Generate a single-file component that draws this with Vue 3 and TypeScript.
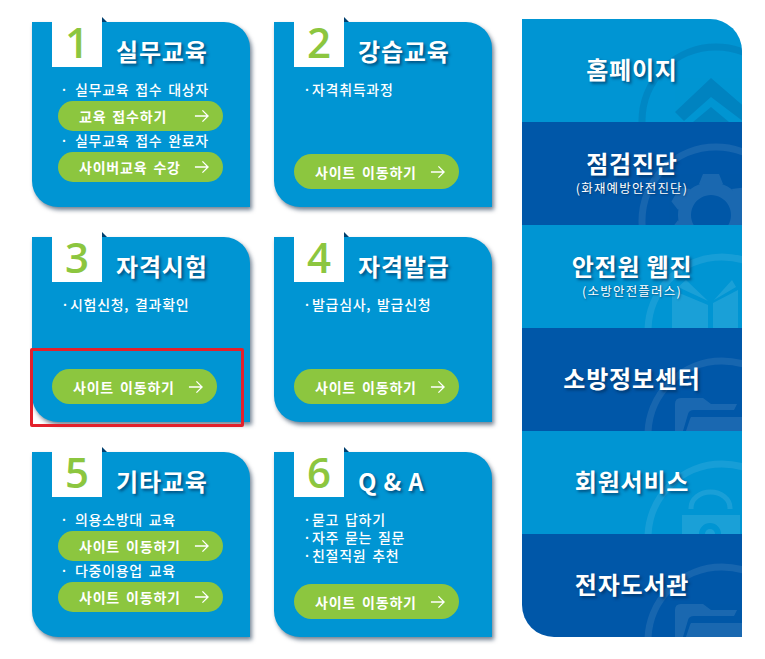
<script setup lang="ts">
interface Block { text: string[]; button?: string }
interface Card { num: number; title: string; wide: boolean; blocks: Block[]; tail?: string; marked?: boolean }
const cards: Card[] = [
  { num: 1, title: '실무교육', wide: true, blocks: [
    { text: ['실무교육 접수 대상자'], button: '교육 접수하기' },
    { text: ['실무교육 접수 완료자'], button: '사이버교육 수강' } ] },
  { num: 2, title: '강습교육', wide: false, blocks: [{ text: ['자격취득과정'] }], tail: '사이트 이동하기' },
  { num: 3, title: '자격시험', wide: false, blocks: [{ text: ['시험신청, 결과확인'] }], tail: '사이트 이동하기', marked: true },
  { num: 4, title: '자격발급', wide: false, blocks: [{ text: ['발급심사, 발급신청'] }], tail: '사이트 이동하기' },
  { num: 5, title: '기타교육', wide: true, blocks: [
    { text: ['의용소방대 교육'], button: '사이트 이동하기' },
    { text: ['다중이용업 교육'], button: '사이트 이동하기' } ] },
  { num: 6, title: 'Q & A', wide: false, blocks: [{ text: ['묻고 답하기', '자주 묻는 질문', '친절직원 추천'] }], tail: '사이트 이동하기' },
]
const bands = [
  { title: '홈페이지', sub: '', kind: 'home', dark: false, cx: 194, cy: 102 },
  { title: '점검진단', sub: '(화재예방안전진단)', kind: 'gear', dark: true, cx: 194, cy: 99 },
  { title: '안전원 웹진', sub: '(소방안전플러스)', kind: 'book', dark: false, cx: 200, cy: 106 },
  { title: '소방정보센터', sub: '', kind: 'folder', dark: true, cx: 200, cy: 107 },
  { title: '회원서비스', sub: '', kind: 'lock', dark: false, cx: 200, cy: 107 },
  { title: '전자도서관', sub: '', kind: 'folder', dark: true, cx: 200, cy: 107 },
]
const teeth = [0, 60, 120, 180, 240, 300]
</script>

<template>
  <div class="page">
    <div class="cards">
      <section v-for="c in cards" :key="c.num" class="card" :class="{ wide: c.wide }">
        <header class="head">
          <div class="tab"><span class="num">{{ c.num }}</span><i class="fold"></i></div>
          <h2 class="title">{{ c.title }}</h2>
        </header>
        <div class="body">
          <div v-for="(b, i) in c.blocks" :key="i" class="block">
            <p v-for="t in b.text" :key="t" class="line"><span class="dot">·</span>{{ t }}</p>
            <a v-if="b.button" class="btn small">
              <span>{{ b.button }}</span>
              <svg class="arrow" viewBox="0 0 16 14"><path d="M1 7h14M9 1l6 6-6 6" /></svg>
            </a>
          </div>
          <a v-if="c.tail" class="btn tail">
            <span>{{ c.tail }}</span>
            <svg class="arrow" viewBox="0 0 16 14"><path d="M1 7h14M9 1l6 6-6 6" /></svg>
          </a>
        </div>
        <div v-if="c.marked" class="mark"></div>
      </section>
    </div>
    <nav class="side">
      <a v-for="b in bands" :key="b.title" class="band" :class="{ dark: b.dark }">
        <svg class="deco" :class="b.kind" viewBox="0 0 220 103">
          <circle class="ring" :cx="b.cx" :cy="b.cy" r="74" />
          <g v-if="b.kind === 'home'" class="shape">
            <path d="M189 59L225 90V103H222L189 78L162 102L153 93z" />
            <path d="M189 88L207 103H171z" />
          </g>
          <g v-else-if="b.kind === 'gear'" class="shape">
            <path fill-rule="evenodd" d="M189 60a33 33 0 1 0 .01 0zM189 73a20 20 0 1 1-.01 0z" />
            <path v-for="a in teeth" :key="a" :transform="`rotate(${a} 189 93)`" d="M181 52h16l4 10h-24z" />
          </g>
          <g v-else-if="b.kind === 'book'" class="shape">
            <path d="M150 65L186 80V103H150z" />
            <path d="M191 78L216 65V103H191z" />
            <path d="M164 55L186 76L156 62z" />
            <path d="M210 55L192 75L214 62z" />
          </g>
          <g v-else-if="b.kind === 'folder'" class="shape">
            <path d="M153 103V76q0-6 6-6h22l8 6h26l-3 6h-40q-5 0-6 4l-5 17z" />
            <path d="M169 89h51v14h-56l4-12z" />
          </g>
          <g v-else class="shape">
            <path class="shackle" d="M169 78v-1a19.5 16 0 0 1 39 0v1" />
            <path d="M160 84h58v19h-19a11 11 0 0 0-22 0h-17z" />
            <circle cx="188" cy="103" r="5" />
          </g>
        </svg>
        <strong class="band-title">{{ b.title }}</strong>
        <small v-if="b.sub" class="band-sub">{{ b.sub }}</small>
      </a>
    </nav>
  </div>
</template>

<style scoped>
.page {
  width: 765px;
  height: 659px;
  display: flex;
  align-items: flex-start;
  background: #fff;
  font-family: "Noto Sans CJK KR", "Noto Sans", sans-serif;
  overflow: hidden;
}
.cards {
  margin: 22px 0 0 32px;
  display: grid;
  grid-template-columns: 218px 218px;
  grid-auto-rows: 185px;
  column-gap: 24px;
  row-gap: 30px;
}
.card {
  position: relative;
  background: #0095d3;
  border-radius: 0 26px 0 26px;
  box-shadow: 2px 3px 4px rgba(0, 30, 60, 0.55);
  color: #fff;
  display: flex;
  flex-direction: column;
}
.head {
  display: flex;
  align-items: flex-start;
  height: 45px;
  padding-left: 20px;
  flex: none;
}
.tab {
  position: relative;
  width: 50px;
  height: 50px;
  margin-top: -5px;
  background: #fff;
  text-align: center;
  flex: none;
}
.fold {
  position: absolute;
  left: 50px;
  top: 0;
  width: 0;
  height: 0;
  border-style: solid;
  border-width: 5px 0 0 5px;
  border-color: transparent transparent transparent #00406f;
}
.num {
  font-family: "Open Sans", sans-serif;
  font-weight: 600;
  font-size: 42px;
  line-height: 50px;
  color: #8cc63f;
}
.title {
  margin: 10px 0 0 14px;
  font-size: 24px;
  line-height: 38px;
  font-weight: 700;
  letter-spacing: 0.8px;
  white-space: pre;
  text-shadow: 2px 2px 3px rgba(0, 40, 80, 0.65);
}
.body {
  flex: 1;
  display: flex;
  flex-direction: column;
  padding: 13px 0 18px 29px;
}
.wide .body {
  padding: 13px 0 0 26px;
}
.line {
  margin: 0;
  font-size: 14px;
  font-weight: 500;
  line-height: 18px;
  letter-spacing: 0.7px;
  word-spacing: 2px;
  white-space: nowrap;
}
.dot {
  display: inline-block;
  width: 9px;
}
.wide .line {
  margin-left: 2px;
}
.wide .dot {
  width: 15px;
}
.btn {
  display: flex;
  align-items: center;
  justify-content: space-between;
  box-sizing: border-box;
  width: 165px;
  height: 35px;
  padding: 0 14px 0 21px;
  border-radius: 18px;
  background: #8cc63f;
  color: #fff;
  font-size: 14px;
  font-weight: 700;
  letter-spacing: 0.8px;
  word-spacing: 2px;
}
.small {
  height: 30px;
  margin: 3px 0 0;
  border-radius: 15px;
}
.tail {
  margin-top: auto;
  margin-left: -9px;
}
.arrow {
  width: 15px;
  height: 14px;
  fill: none;
  stroke: #fff;
  stroke-width: 1.4;
}
.mark {
  position: absolute;
  left: -2px;
  top: 111px;
  width: 214px;
  height: 79px;
  box-sizing: border-box;
  border: 3px solid #e3202b;
  border-radius: 2px;
}
.side {
  margin: 19px 0 0 30px;
  width: 220px;
  border-radius: 0 32px 0 32px;
  overflow: hidden;
  display: flex;
  flex-direction: column;
}
.band {
  position: relative;
  box-sizing: border-box;
  height: 103px;
  padding-bottom: 4px;
  overflow: hidden;
  background: #0095d3;
  color: #fff;
  display: flex;
  flex-direction: column;
  align-items: center;
  justify-content: center;
}
.band.dark {
  background: #0057a8;
}
.deco {
  position: absolute;
  inset: 0;
  width: 220px;
  height: 103px;
}
.ring {
  fill: none;
  stroke: rgba(255, 255, 255, 0.09);
  stroke-width: 7;
}
.shape {
  fill: #fff;
  stroke: none;
  opacity: 0.1;
}
.shackle {
  fill: none;
  stroke: #fff;
  stroke-width: 5;
}
.home .ring {
  stroke: rgba(0, 60, 120, 0.16);
}
.home .shape {
  fill: #003c78;
  opacity: 0.2;
}
.band-title {
  position: relative;
  font-size: 24px;
  line-height: 34px;
  font-weight: 700;
  letter-spacing: 0.8px;
  white-space: pre;
  text-shadow: 2px 2px 3px rgba(0, 40, 80, 0.65);
}
.band-sub {
  position: relative;
  margin-top: 1px;
  margin-bottom: 2px;
  font-size: 12.5px;
  line-height: 14px;
  letter-spacing: 1.2px;
  text-shadow: 1px 1px 2px rgba(0, 40, 80, 0.6);
}
</style>
